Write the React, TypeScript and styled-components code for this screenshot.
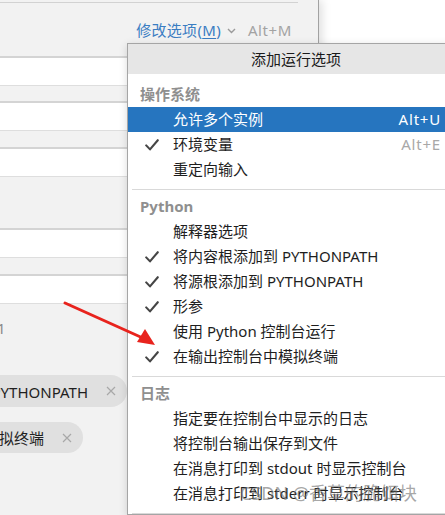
import React from "react";
import styled, { createGlobalStyle } from "styled-components";

const Global = createGlobalStyle`
  html, body { margin: 0; padding: 0; background: #ffffff; overflow: hidden; }
  body { font-family: "Noto Sans", "Noto Sans CJK SC", sans-serif; }
`;

const FONT = `"Noto Sans", "Noto Sans CJK SC", sans-serif`;

const Page = styled.div`
  position: relative;
  width: 445px;
  height: 515px;
  overflow: hidden;
  display: flex;
  background: #ffffff;
  font-family: ${FONT};
`;

const LeftPane = styled.div`
  width: 318px;
  flex-shrink: 0;
  height: 100%;
  background: #f2f2f2;
  border-right: 1px solid #a2a2a2;
  box-shadow: 3px 0 9px rgba(0, 0, 0, 0.13);
  display: flex;
  flex-direction: column;
  overflow: hidden;
`;

const TopRule = styled.div`
  margin-top: 2px;
  width: 298px;
  height: 1px;
  background: #d2d2d2;
`;

const OptionsBar = styled.div`
  height: 53px;
  display: flex;
  align-items: center;
  justify-content: flex-end;
  padding-right: 26px;
  font-size: 15px;
`;

const OptLink = styled.span`
  color: #3b7dc2;
  line-height: 20px;
  letter-spacing: 0.3px;
  u { text-decoration-thickness: 1px; text-underline-offset: 2px; }
`;

const ChevronBox = styled.span`
  display: inline-flex;
  margin: 2px 12px 0 6px;
`;

const Hint = styled.span`
  color: #a3a3a3;
  line-height: 20px;
  letter-spacing: 0.6px;
`;

const Field = styled.div<{ $gap: number }>`
  margin-top: ${(p) => p.$gap}px;
  height: 30px;
  flex-shrink: 0;
  box-sizing: border-box;
  background: #ffffff;
  border-top: 2px solid #d4d4d4;
  border-bottom: 1px solid #dedede;
`;

const Stub = styled.div`
  margin: 14px 0 0 -3px;
  height: 20px;
  line-height: 20px;
  font-size: 15px;
  color: #8a8a8a;
`;

const ChipRow = styled.div<{ $w: number; $gap: number }>`
  width: ${(p) => p.$w}px;
  margin-top: ${(p) => p.$gap}px;
  display: flex;
  justify-content: flex-end;
`;

const Chip = styled.div<{ $h: number }>`
  flex-shrink: 0;
  height: ${(p) => p.$h}px;
  display: flex;
  align-items: center;
  gap: 18px;
  padding: 0 11px 0 20px;
  border-radius: 16px;
  background: #e0e0e0;
  font-size: 15px;
  color: #1f1f1f;
  white-space: nowrap;
`;

const ChipClose = styled.span`
  display: inline-flex;
  color: #a8a8a8;
`;

const Menu = styled.div`
  position: absolute;
  left: 127px;
  top: 43px;
  width: 336px;
  background: #ffffff;
  border: 1px solid #a5a5a5;
  box-shadow: 0 2px 8px rgba(0, 0, 0, 0.15);
  font-size: 15px;
  color: #1e1e1e;
`;

const MenuHeader = styled.div`
  height: 30px;
  line-height: 30px;
  background: #e6e6e6;
  text-align: center;
  color: #1a1a1a;
`;

const SectionLabel = styled.div<{ $first?: boolean }>`
  margin-top: ${(p) => (p.$first ? 8 : 4)}px;
  height: 25px;
  line-height: 25px;
  padding-left: 12px;
  color: #8f8f8f;
  font-weight: 700;
`;

const Row = styled.div<{ $active?: boolean }>`
  height: 25px;
  display: grid;
  grid-template-columns: 31px 1fr auto;
  align-items: center;
  padding: 0 23px 0 14px;
  background: ${(p) => (p.$active ? "#2675bf" : "transparent")};
  color: ${(p) => (p.$active ? "#ffffff" : "#1e1e1e")};
  line-height: 25px;
  white-space: nowrap;
`;

const CheckCell = styled.span`
  display: inline-flex;
  padding-left: 3px;
`;

const Shortcut = styled.span<{ $active?: boolean }>`
  color: ${(p) => (p.$active ? "#ffffff" : "#a8a8a8")};
  letter-spacing: 0.8px;
`;

const Separator = styled.div`
  margin: 7px 0 0 4px;
  height: 1px;
  background: #d9d9d9;
`;

const ArrowSvg = styled.svg`
  position: absolute;
  left: 0;
  top: 0;
  pointer-events: none;
`;

const Watermark = styled.div`
  position: absolute;
  z-index: 2;
  left: 240px;
  top: 481px;
  font-size: 18px;
  line-height: 24px;
  color: rgba(110, 110, 110, 0.62);
  font-family: ${FONT};
  white-space: nowrap;
  pointer-events: none;
`;

const Check = () => (
  <svg width="14" height="12" viewBox="0 0 14 12">
    <path d="M1.2 6.4 L5 10.4 L12.8 1.2" fill="none" stroke="#454545" strokeWidth="2.1" strokeLinecap="round" strokeLinejoin="round" />
  </svg>
);

const Close = () => (
  <svg width="10" height="10" viewBox="0 0 10 10">
    <path d="M1 1 L9 9 M9 1 L1 9" stroke="currentColor" strokeWidth="1.2" />
  </svg>
);

type Item = { label: string; checked?: boolean; shortcut?: string; active?: boolean };

const sections: { title: string; items: Item[] }[] = [
  {
    title: "操作系统",
    items: [
      { label: "允许多个实例", shortcut: "Alt+U", active: true },
      { label: "环境变量", checked: true, shortcut: "Alt+E" },
      { label: "重定向输入" },
    ],
  },
  {
    title: "Python",
    items: [
      { label: "解释器选项" },
      { label: "将内容根添加到 PYTHONPATH", checked: true },
      { label: "将源根添加到 PYTHONPATH", checked: true },
      { label: "形参", checked: true },
      { label: "使用 Python 控制台运行" },
      { label: "在输出控制台中模拟终端", checked: true },
    ],
  },
  {
    title: "日志",
    items: [
      { label: "指定要在控制台中显示的日志" },
      { label: "将控制台输出保存到文件" },
      { label: "在消息打印到 stdout 时显示控制台" },
      { label: "在消息打印到 stderr 时显示控制台" },
    ],
  },
];

export default function App() {
  return (
    <>
      <Global />
      <Page>
        <LeftPane>
          <TopRule />
          <OptionsBar>
            <OptLink>
              修改选项(<u>M</u>)
            </OptLink>
            <ChevronBox>
              <svg width="9" height="6" viewBox="0 0 9 6">
                <path d="M1 1 L4.5 4.5 L8 1" fill="none" stroke="#9a9a9a" strokeWidth="1.4" />
              </svg>
            </ChevronBox>
            <Hint>Alt+M</Hint>
          </OptionsBar>
          <Field $gap={0} />
          <Field $gap={15} />
          <Field $gap={16} />
          <Field $gap={51} />
          <Field $gap={16} />
          <Stub>1</Stub>
          <ChipRow $w={127} $gap={37}>
            <Chip $h={32}>
              <span>将内容根添加到 PYTHONPATH</span>
              <ChipClose>
                <Close />
              </ChipClose>
            </Chip>
          </ChipRow>
          <ChipRow $w={83} $gap={15}>
            <Chip $h={31}>
              <span>在输出控制台中模拟终端</span>
              <ChipClose>
                <Close />
              </ChipClose>
            </Chip>
          </ChipRow>
        </LeftPane>

        <Menu>
          <MenuHeader>添加运行选项</MenuHeader>
          {sections.map((s, si) => (
            <React.Fragment key={s.title}>
              <SectionLabel $first={si === 0}>{s.title}</SectionLabel>
              {s.items.map((it) => (
                <Row key={it.label} $active={it.active}>
                  <CheckCell>{it.checked ? <Check /> : null}</CheckCell>
                  <span>{it.label}</span>
                  <Shortcut $active={it.active}>{it.shortcut ?? ""}</Shortcut>
                </Row>
              ))}
              <Separator />
            </React.Fragment>
          ))}
        </Menu>

        <ArrowSvg width="445" height="515" viewBox="0 0 445 515">
          <line x1="65" y1="303" x2="145" y2="339" stroke="#e8231d" strokeWidth="3" strokeLinecap="round" />
          <polygon points="155,345 137,342 145,329" fill="#e8231d" />
        </ArrowSvg>

        <Watermark>CSDN @香草的脆饵块</Watermark>
      </Page>
    </>
  );
}
